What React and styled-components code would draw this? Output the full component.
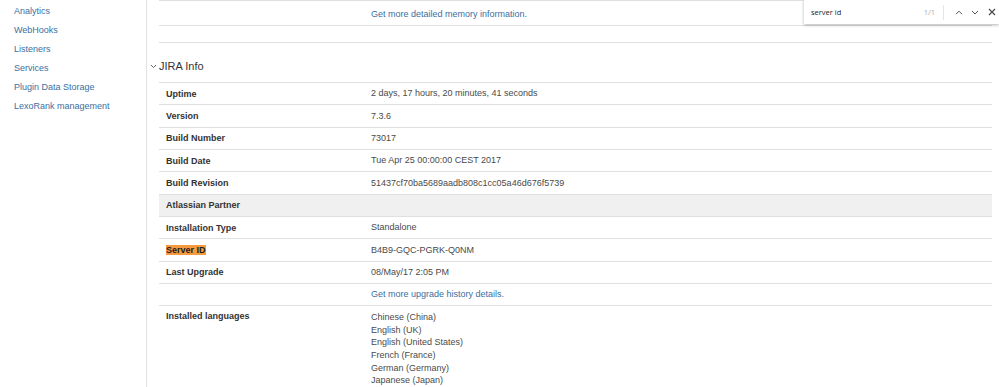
import React from "react";
import styled, { createGlobalStyle } from "styled-components";

const GlobalStyle = createGlobalStyle`
  html, body { margin: 0; padding: 0; background: #fff; }
  body {
    font-family: "Liberation Sans", Arial, sans-serif;
    font-size: 9px;
    color: #333;
    overflow: hidden;
  }
`;

const Page = styled.div`
  display: flex;
  width: 999px;
  height: 387px;
  position: relative;
  overflow: hidden;
`;

const Sidebar = styled.nav`
  width: 147px;
  flex: none;
  border-right: 1px solid #e2e2e2;
  padding-top: 2px;
  box-sizing: border-box;
`;

const NavItem = styled.a`
  display: block;
  padding-left: 14px;
  height: 19px;
  line-height: 19px;
  color: #3b6f9f;
  text-decoration: none;
  font-size: 9px;
`;

const Main = styled.main`
  flex: 1;
  padding: 0 7px 0 12px;
`;

const Row = styled.div`
  display: grid;
  grid-template-columns: 212px 1fr;
  align-items: ${(p) => (p.$top ? "start" : "center")};
  min-height: ${(p) => p.$h || 22.33}px;
  padding-top: ${(p) => p.$pt || 0}px;
  box-sizing: border-box;
  border-bottom: ${(p) => (p.$noBottom ? "none" : "1px solid #e0e0e0")};
  border-top: ${(p) => (p.$borderTop ? "1px solid #e0e0e0" : "none")};
  background: ${(p) => (p.$shaded ? "#f0f0f0" : "transparent")};
`;

const Label = styled.div`
  padding-left: 7px;
  font-weight: bold;
  color: #333;
`;

const Value = styled.div`
  color: #4a4a4a;
  line-height: 12.6px;
`;

const Link = styled.a`
  color: #3b6f9f;
  text-decoration: none;
`;

const Mark = styled.span`
  background: #f7993f;
  color: #222;
`;

const Spacer = styled.div`
  height: 16px;
  border-bottom: 1px solid #e0e0e0;
`;

const HeadingWrap = styled.div`
  border-bottom: 1px solid #e0e0e0;
`;

const HeadingInner = styled.h2`
  display: flex;
  align-items: center;
  gap: 2px;
  margin: 0 0 0 -9px;
  padding: 16px 0 9px;
  font-size: 11px;
  line-height: 14px;
  font-weight: normal;
  color: #333;
`;

const FindBar = styled.div`
  position: absolute;
  top: 0;
  left: 804px;
  width: 195px;
  height: 24px;
  background: #fff;
  box-shadow: 0 1px 3px rgba(0, 0, 0, 0.3);
  display: flex;
  align-items: center;
  font-family: "Open Sans", "Noto Sans", sans-serif;
  font-size: 7.5px;
  color: #222;
`;

const FindText = styled.span`
  flex: 1;
  padding-left: 7px;
`;

const FindCount = styled.span`
  color: #aaa;
  padding-right: 8px;
`;

const FindSep = styled.span`
  width: 1px;
  height: 15px;
  background: #e5e5e5;
  margin-right: 9px;
`;

const FindBtn = styled.span`
  display: flex;
  align-items: center;
  justify-content: center;
  width: 12px;
  margin-right: ${(p) => p.$mr || 5}px;
`;

const Chevron = ({ up }) => (
  <svg width="8" height="5" viewBox="0 0 8 5">
    <path
      d={up ? "M1 4.2 L4 1.2 L7 4.2" : "M1 1 L4 4 L7 1"}
      fill="none"
      stroke="#555"
      strokeWidth="1"
    />
  </svg>
);

const rows = [
  { label: "Uptime", value: "2 days, 17 hours, 20 minutes, 41 seconds" },
  { label: "Version", value: "7.3.6" },
  { label: "Build Number", value: "73017" },
  { label: "Build Date", value: "Tue Apr 25 00:00:00 CEST 2017" },
  { label: "Build Revision", value: "51437cf70ba5689aadb808c1cc05a46d676f5739" },
  { label: "Atlassian Partner", value: "", shaded: true },
  { label: "Installation Type", value: "Standalone" },
  { label: <Mark>Server ID</Mark>, value: "B4B9-GQC-PGRK-Q0NM" },
  { label: "Last Upgrade", value: "08/May/17 2:05 PM" },
  { label: "", value: <Link>Get more upgrade history details.</Link> },
];

const languages = [
  "Chinese (China)",
  "English (UK)",
  "English (United States)",
  "French (France)",
  "German (Germany)",
  "Japanese (Japan)",
];

const nav = [
  "Analytics",
  "WebHooks",
  "Listeners",
  "Services",
  "Plugin Data Storage",
  "LexoRank management",
];

export default function App() {
  return (
    <>
      <GlobalStyle />
      <Page>
        <Sidebar>
          {nav.map((n) => (
            <NavItem key={n}>{n}</NavItem>
          ))}
        </Sidebar>
        <Main>
          <Row $borderTop $h={26} $pt={3}>
            <Label />
            <Value>
              <Link>Get more detailed memory information.</Link>
            </Value>
          </Row>
          <Spacer />
          <HeadingWrap>
            <HeadingInner>
              <svg width="7" height="5" viewBox="0 0 7 5">
                <path d="M1 1 L3.5 3.6 L6 1" fill="none" stroke="#666" strokeWidth="1" />
              </svg>
              JIRA Info
            </HeadingInner>
          </HeadingWrap>
          {rows.map((r, i) => (
            <Row key={i} $shaded={r.shaded}>
              <Label>{r.label}</Label>
              <Value>{r.value}</Value>
            </Row>
          ))}
          <Row $top $pt={5} $h={110} $noBottom>
            <Label>Installed languages</Label>
            <Value>
              {languages.map((l) => (
                <div key={l}>{l}</div>
              ))}
            </Value>
          </Row>
        </Main>
        <FindBar>
          <FindText>server id</FindText>
          <FindCount>1/1</FindCount>
          <FindSep />
          <FindBtn $mr={4}>
            <Chevron up />
          </FindBtn>
          <FindBtn $mr={5}>
            <Chevron />
          </FindBtn>
          <FindBtn $mr={1}>
            <svg width="8" height="8" viewBox="0 0 8 8">
              <path d="M1 1 L7 7 M7 1 L1 7" stroke="#444" strokeWidth="1.1" />
            </svg>
          </FindBtn>
        </FindBar>
      </Page>
    </>
  );
}
